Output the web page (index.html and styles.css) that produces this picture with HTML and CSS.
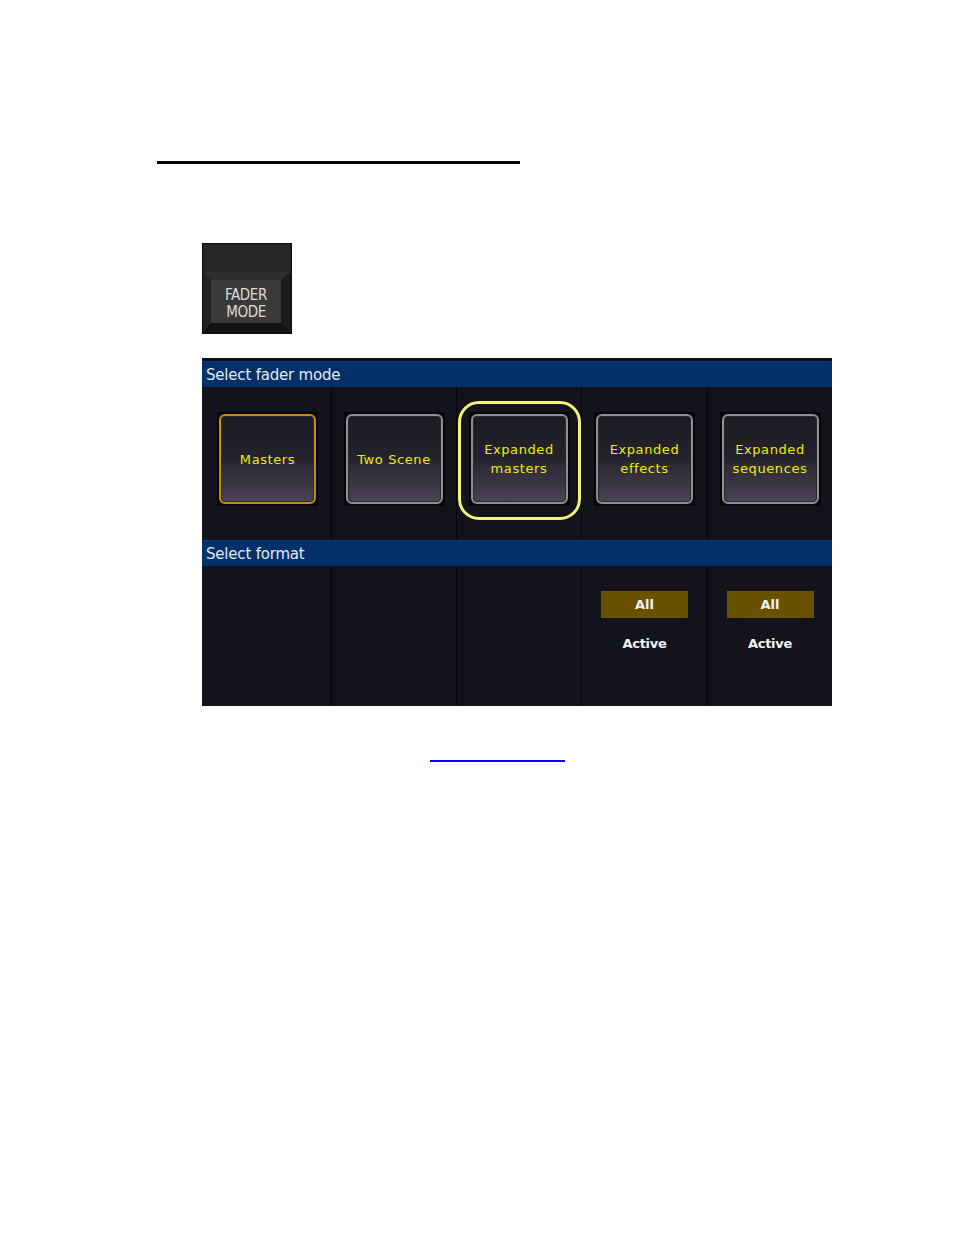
FILE: index.html
```html
<!DOCTYPE html>
<html>
<head>
<meta charset="utf-8">
<link rel="stylesheet" href="styles.css">
</head>
<body>
<div class="page">
  <div class="rule"></div>

  <div class="key">
    <div class="key-top"></div>
    <div class="key-bevel">
      <div class="key-face">FADER<br>MODE</div>
    </div>
  </div>

  <div class="panel">
    <div class="strip"></div>
    <div class="head">Select fader mode</div>
    <div class="row row-modes">
      <div class="cell">
        <div class="slot"><div class="bwrap"><div class="btn btn-active">Masters</div></div></div>
      </div>
      <div class="cell">
        <div class="slot"><div class="bwrap"><div class="btn">Two Scene</div></div></div>
      </div>
      <div class="cell">
        <div class="slot slot-ring"><div class="bwrap"><div class="btn">Expanded<br>masters</div></div></div>
      </div>
      <div class="cell">
        <div class="slot"><div class="bwrap"><div class="btn">Expanded<br>effects</div></div></div>
      </div>
      <div class="cell">
        <div class="slot"><div class="bwrap"><div class="btn">Expanded<br>sequences</div></div></div>
      </div>
    </div>
    <div class="head">Select format</div>
    <div class="row row-format">
      <div class="cell"></div>
      <div class="cell"></div>
      <div class="cell"></div>
      <div class="cell">
        <div class="all">All</div>
        <div class="active">Active</div>
      </div>
      <div class="cell">
        <div class="all">All</div>
        <div class="active">Active</div>
      </div>
    </div>
  </div>

  <div class="link-line"></div>
</div>
</body>
</html>
```

FILE: styles.css
```css
html, body {
  margin: 0;
  padding: 0;
  background: #ffffff;
}

.page {
  width: 954px;
  height: 1235px;
  display: flow-root;
  overflow: hidden;
  font-family: "DejaVu Sans", sans-serif;
}

.rule {
  margin: 161px 0 0 157px;
  width: 363px;
  height: 3px;
  background: #000000;
}

/* FADER MODE key */
.key {
  margin: 79px 0 0 202px;
  width: 88px;
  height: 89px;
  border: 1px solid #0b0b0b;
  background: #1d1d1d;
  display: flex;
  flex-direction: column;
}

.key-top {
  height: 28px;
  background: #252525;
}

.key-bevel {
  flex: 1;
  border-style: solid;
  border-width: 8px 10px 10px 8px;
  border-color: #2e2e2e #1b1b1b #131313 #222222;
  display: flex;
}

.key-face {
  flex: 1;
  background: #3a3a3a;
  color: #dcdcdc;
  font-family: "DejaVu Sans Condensed", "DejaVu Sans", sans-serif;
  font-stretch: condensed;
  font-size: 15px;
  line-height: 17px;
  text-align: center;
  display: flex;
  align-items: center;
  justify-content: center;
  padding-top: 4px;
  letter-spacing: -0.4px;
}

/* Panel */
.panel {
  margin: 24px 0 0 202px;
  width: 630px;
  background: #13141b;
}

.strip {
  height: 3px;
  background: #0c0d13;
}

.head {
  height: 25px;
  background: #03306b;
  border-top: 1px solid #0a3a78;
  color: #e4e8f0;
  font-size: 15px;
  line-height: 26px;
  padding-left: 4px;
  letter-spacing: -0.2px;
}

.row {
  display: grid;
  grid-template-columns: 129px 124px 124px 125px 124px;
  column-gap: 1px;
  background: #050507;
}

.row-modes {
  height: 153px;
}

.row-format {
  height: 140px;
}

.cell {
  background: #13141b;
  display: flex;
  flex-direction: column;
  align-items: center;
}

.row-modes .cell {
  padding-top: 14px;
}

.row-modes .cell:first-child {
  padding-left: 2px;
}

.slot {
  width: 123px;
  height: 119px;
  box-sizing: border-box;
  display: flex;
  align-items: center;
  justify-content: center;
  border: 3px solid transparent;
  border-radius: 21px;
}

.slot-ring {
  border-color: #f3f37c;
}

.bwrap {
  background: #060608;
  padding: 2px;
  margin-top: -3px;
}

.btn {
  width: 97px;
  height: 90px;
  box-sizing: border-box;
  border: 2px solid #8e8e93;
  border-radius: 6px;
  background: linear-gradient(to bottom, #1c1b24 0%, #24222c 50%, #2f2b37 58%, #3b3644 80%, #4a4455 100%);
  box-shadow: inset 0 0 0 1px #2a2830;
  color: #eded00;
  font-size: 13px;
  line-height: 19px;
  letter-spacing: 0.6px;
  text-align: center;
  display: flex;
  align-items: center;
  justify-content: center;
}

.btn-active {
  border-color: #c48e06;
}

.row-format .cell {
  padding-top: 25px;
}

.all {
  width: 87px;
  height: 27px;
  background: #6a5100;
  color: #f2f2f2;
  font-weight: bold;
  font-size: 13px;
  line-height: 27px;
  text-align: center;
}

.active {
  margin-top: 17px;
  color: #f2f2f2;
  font-weight: bold;
  font-size: 13px;
  line-height: 18px;
  letter-spacing: -0.3px;
}

.link-line {
  margin: 54px 0 0 430px;
  width: 135px;
  height: 2px;
  background: #0000ff;
}
```
